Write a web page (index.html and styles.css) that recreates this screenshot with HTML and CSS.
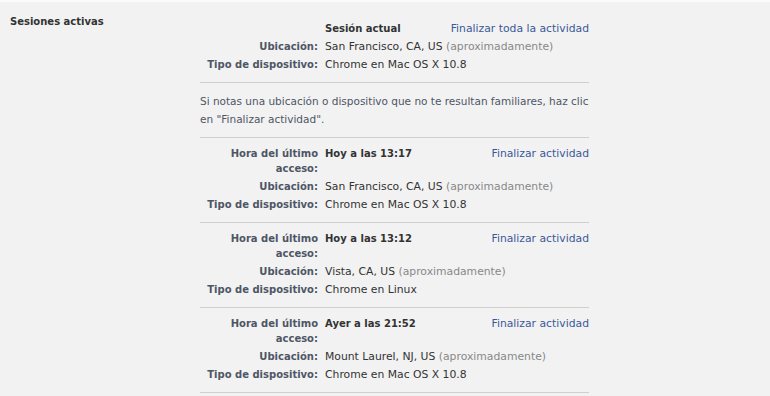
FILE: index.html
```html
<!DOCTYPE html>
<html lang="es">
<head>
    <meta charset="UTF-8">
    <title>Sesiones activas</title>
    <link rel="stylesheet" href="styles.css">
</head>
<body>
    <div class="settings">
        <div class="section-title">Sesiones activas</div>
        <div class="sessions">
            <div class="session current">
                <div class="row">
                    <div class="label"></div>
                    <div class="value strong">Sesión actual</div>
                    <a class="action" href="#">Finalizar toda la actividad</a>
                </div>
                <div class="row">
                    <div class="label">Ubicación:</div>
                    <div class="value">San Francisco, CA, US <span class="muted">(aproximadamente)</span></div>
                </div>
                <div class="row">
                    <div class="label">Tipo de dispositivo:</div>
                    <div class="value">Chrome en Mac OS X 10.8</div>
                </div>
            </div>

            <div class="notice">Si notas una ubicación o dispositivo que no te resultan familiares, haz clic en "Finalizar actividad".</div>

            <div class="session">
                <div class="row">
                    <div class="label">Hora del último acceso:</div>
                    <div class="value strong">Hoy a las 13:17</div>
                    <a class="action" href="#">Finalizar actividad</a>
                </div>
                <div class="row">
                    <div class="label">Ubicación:</div>
                    <div class="value">San Francisco, CA, US <span class="muted">(aproximadamente)</span></div>
                </div>
                <div class="row">
                    <div class="label">Tipo de dispositivo:</div>
                    <div class="value">Chrome en Mac OS X 10.8</div>
                </div>
            </div>

            <div class="session">
                <div class="row">
                    <div class="label">Hora del último acceso:</div>
                    <div class="value strong">Hoy a las 13:12</div>
                    <a class="action" href="#">Finalizar actividad</a>
                </div>
                <div class="row">
                    <div class="label">Ubicación:</div>
                    <div class="value">Vista, CA, US <span class="muted">(aproximadamente)</span></div>
                </div>
                <div class="row">
                    <div class="label">Tipo de dispositivo:</div>
                    <div class="value">Chrome en Linux</div>
                </div>
            </div>

            <div class="session">
                <div class="row">
                    <div class="label">Hora del último acceso:</div>
                    <div class="value strong">Ayer a las 21:52</div>
                    <a class="action" href="#">Finalizar actividad</a>
                </div>
                <div class="row">
                    <div class="label">Ubicación:</div>
                    <div class="value">Mount Laurel, NJ, US <span class="muted">(aproximadamente)</span></div>
                </div>
                <div class="row">
                    <div class="label">Tipo de dispositivo:</div>
                    <div class="value">Chrome en Mac OS X 10.8</div>
                </div>
            </div>
        </div>
    </div>
</body>
</html>
```

FILE: styles.css
```css
body {
    margin: 0;
    background-color: #f2f2f2;
    border-top: 2px solid #fbfbfb;
    font-family: "DejaVu Sans", sans-serif;
    font-size: 10.8px;
    color: #333;
    overflow: hidden;
}
.settings {
    display: flex;
}
.section-title {
    width: 190px;
    padding: 12px 0 0 10px;
    font-weight: bold;
    font-size: 10px;
    line-height: 15px;
    color: #333;
}
.sessions {
    width: 389px;
    padding-top: 11px;
}
.session {
    display: flex;
    flex-direction: column;
    gap: 3px;
    padding: 8px 0 10px;
    border-bottom: 1px solid #cfcfcf;
}
.row {
    display: flex;
    line-height: 15px;
}
.label {
    width: 118px;
    flex-shrink: 0;
    text-align: right;
    font-weight: bold;
    font-size: 10px;
    color: #4e5665;
}
.value {
    flex: 1;
    padding-left: 7px;
}
.strong {
    font-weight: bold;
    font-size: 10px;
}
.muted {
    color: #888;
}
.action {
    color: #3b5998;
    text-decoration: none;
    white-space: nowrap;
}
.notice {
    padding: 9px 0;
    font-size: 10.5px;
    line-height: 18px;
    color: #4e5665;
    border-bottom: 1px solid #cfcfcf;
}
```
